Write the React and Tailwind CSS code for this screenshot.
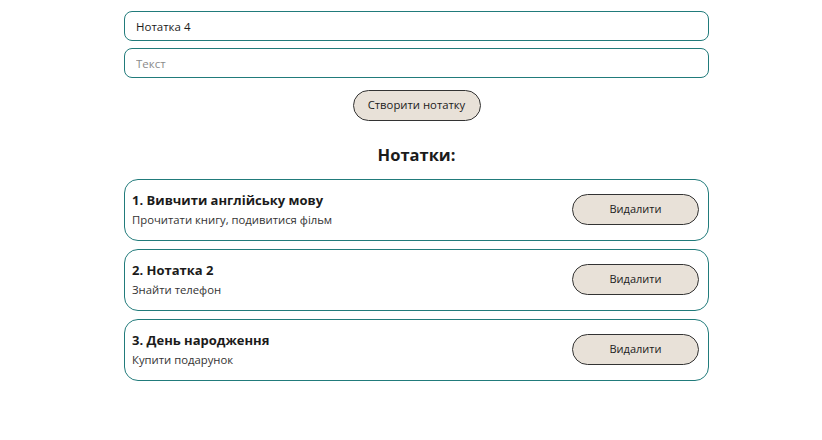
import React, { useState } from "react";

const initialNotes = [
  { id: 1, title: "Вивчити англійську мову", text: "Прочитати книгу, подивитися фільм" },
  { id: 2, title: "Нотатка 2", text: "Знайти телефон" },
  { id: 3, title: "День народження", text: "Купити подарунок" },
];

const App = () => {
  const [notes, setNotes] = useState(initialNotes);
  const [title, setTitle] = useState("Нотатка 4");
  const [text, setText] = useState("");

  const addNote = () => {
    if (!title.trim()) return;
    setNotes([...notes, { id: Date.now(), title, text }]);
    setTitle("");
    setText("");
  };

  const removeNote = (id) => setNotes(notes.filter((n) => n.id !== id));

  return (
    <div
      className="min-h-screen bg-white text-[#1b1b1b] pt-[11px]"
      style={{ fontFamily: '"Open Sans", "Noto Sans", sans-serif' }}
    >
      <div className="ml-[124px] w-[585px] flex flex-col">
        <input
          value={title}
          onChange={(e) => setTitle(e.target.value)}
          className="h-[30px] px-[11px] text-[11.5px] border border-[#217b7b] rounded-[8px] outline-none"
        />
        <input
          value={text}
          onChange={(e) => setText(e.target.value)}
          placeholder="Текст"
          className="mt-[7px] h-[30px] px-[11px] text-[11.5px] border border-[#217b7b] rounded-[8px] outline-none placeholder:text-[#8a8a8a]"
        />
        <div className="flex justify-center mt-[12px]">
          <button
            onClick={addNote}
            className="w-[128px] h-[31px] rounded-full bg-[#e8e1d8] border border-[#333] text-[11.3px]"
          >
            Створити нотатку
          </button>
        </div>

        <h2 className="text-center font-bold text-[16.5px] mt-[26px] mb-[15px] leading-none">
          Нотатки:
        </h2>

        <div className="flex flex-col gap-[8px]">
          {notes.map((note, i) => (
            <div
              key={note.id}
              className="h-[62px] flex items-center justify-between border border-[#217b7b] rounded-[14px] pl-[7px] pr-[9px]"
            >
              <div className="flex flex-col">
                <span className="font-bold text-[13px] leading-[18px]">
                  {i + 1}. {note.title}
                </span>
                <span className="text-[11.3px] leading-[18px] mt-[2px] text-[#333]">{note.text}</span>
              </div>
              <button
                onClick={() => removeNote(note.id)}
                className="w-[127px] h-[31px] rounded-full bg-[#e8e1d8] border border-[#333] text-[11px]"
              >
                Видалити
              </button>
            </div>
          ))}
        </div>
      </div>
    </div>
  );
};

export default App;
